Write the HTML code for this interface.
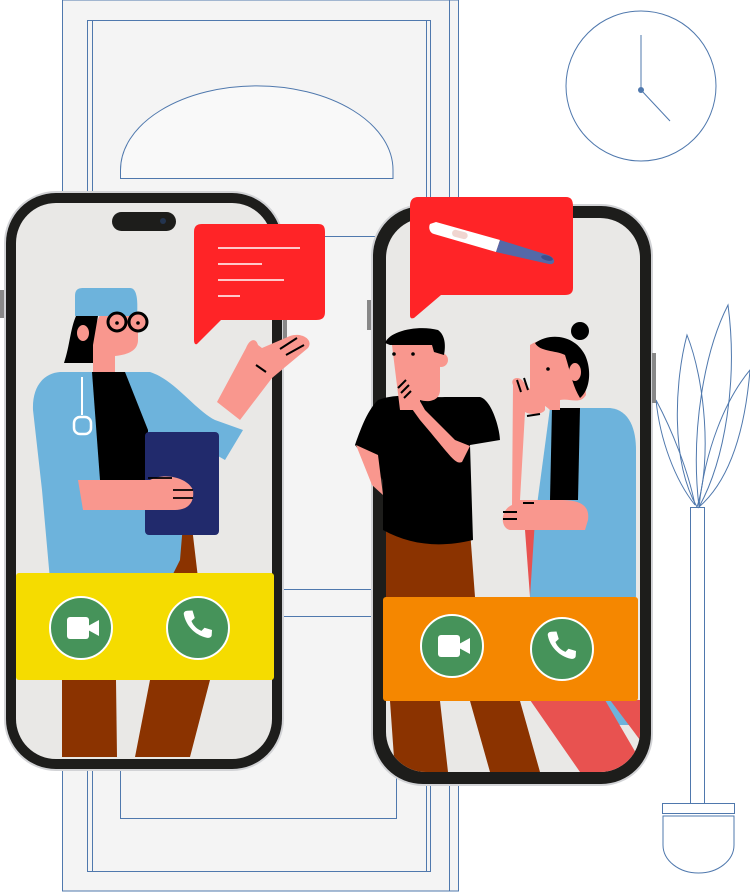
<!DOCTYPE html>
<html><head><meta charset="utf-8"><style>
html,body{margin:0;padding:0;background:#fff;width:750px;height:894px;overflow:hidden}
svg{display:block}
</style></head><body>
<svg width="750" height="894" viewBox="0 0 750 894" xmlns="http://www.w3.org/2000/svg">
<g fill="none" stroke="#4f78ad" stroke-width="1">
 <rect x="62.5" y="0" width="396" height="891" fill="#f4f4f4"/>
 <line x1="449.5" y1="0" x2="449.5" y2="891"/>
 <rect x="87.5" y="20.5" width="343" height="851"/>
 <rect x="92.5" y="20.5" width="334" height="851"/>
 <path d="M120.5 178.5 V170 A136 84 0 0 1 393 170 V178.5 Z" fill="#f9f9f9"/>
 <rect x="120.5" y="236.5" width="276" height="582"/>
 <line x1="120" y1="589.5" x2="397" y2="589.5"/>
 <line x1="120" y1="616.5" x2="397" y2="616.5"/>
 <circle cx="641" cy="86" r="75" fill="#fff"/>
 <line x1="641" y1="90" x2="641" y2="35"/>
 <line x1="641" y1="90" x2="670" y2="121"/>
 <rect x="690.5" y="507.5" width="14" height="296"/>
 <rect x="662.5" y="803.5" width="72" height="10"/>
 <path d="M663 816 H734 V845 A35.5 28 0 0 1 663 845 Z"/>
 <path d="M697 507 C670 460 675 380 687 335 C705 380 712 460 697 507 Z"/>
 <path d="M699 507 C690 430 705 350 728 305 C738 380 725 460 699 507 Z"/>
 <path d="M699 507 C705 450 725 400 750 370 C745 430 730 480 699 507 Z"/>
 <path d="M695 505 C675 480 660 440 656 400 C672 430 688 470 695 505 Z"/>
</g>
<circle cx="641" cy="90" r="3" fill="#4f78ad"/>

<!-- LEFT PHONE -->
<rect x="4" y="191" width="280" height="580" rx="52" fill="#d2d3d6"/>
<rect x="6" y="193" width="276" height="576" rx="50" fill="#1d1d1b"/>
<rect x="16" y="203" width="256" height="556" rx="40" fill="#e9e8e6"/>
<rect x="0" y="290" width="4" height="28" fill="#888"/>
<rect x="283" y="310" width="4" height="50" fill="#888"/>
<clipPath id="c1"><rect x="16" y="203" width="256" height="556" rx="40"/></clipPath>
<g clip-path="url(#c1)">
 <path d="M101 510 H190 L210 680 L190 757 H135 L150 680 H116 L117 757 H62 L62 680 Z" fill="#8b3300"/>
 <path d="M60 372 H150 C175 380 195 410 215 420 L243 430 L225 460 L190 440 L180 560 L170 580 H50 L42 490 L33 410 C32 385 45 373 60 372 Z" fill="#6db3dc"/>
 <path d="M92 372 H125 L148 430 L148 480 H100 Z" fill="#000"/>
 <path d="M82 377 V415" stroke="#fff" stroke-width="2"/>
 <rect x="74" y="417" width="17" height="17" rx="6" fill="none" stroke="#fff" stroke-width="2.5"/>
 <rect x="145" y="432" width="74" height="103" rx="4" fill="#212a6c"/>
 <path d="M78 480 H150 C165 472 188 478 193 490 C195 505 185 510 175 510 H83 Z" fill="#f9978e"/>
 <path d="M148 478 H172 M173 490 H193 M173 498 H193" stroke="#000" stroke-width="1.8"/>
 <path d="M100 315 H138 V340 C138 352 125 355 115 356 V372 H93 V330 Z" fill="#f9978e"/>
 <path d="M98 316 H76 C70 330 70 345 64 363 H93 V345 Z" fill="#000"/>
 <ellipse cx="83" cy="333" rx="6" ry="8" fill="#f9978e"/>
 <path d="M75 296 C75 288 80 288 85 288 H130 C137 288 138 300 137 316 H75 Z" fill="#6db3dc"/>
 <circle cx="117" cy="322" r="9" fill="#f9978e" stroke="#000" stroke-width="3"/>
 <circle cx="138" cy="322" r="9" fill="#f9978e" stroke="#000" stroke-width="3"/>
 <circle cx="117" cy="323" r="1.8" fill="#000"/><circle cx="138" cy="323" r="1.8" fill="#000"/>
</g>
<!-- raised arm (over bezel) -->
<path d="M217 402 L246 348 C250 338 256 338 258 345 L262 348 L290 336 C302 332 314 340 308 348 L272 378 L240 420 Z" fill="#f9978e"/>
<path d="M280 349 L297 338 M286 355 L304 345 M256 365 L266 372" stroke="#000" stroke-width="2"/>
<rect x="112" y="212" width="64" height="19" rx="9.5" fill="#1d1d1b"/>
<circle cx="163" cy="221" r="3" fill="#23344f"/>
<rect x="16" y="573" width="258" height="107" rx="3" fill="#f5dc00"/>
<circle cx="81" cy="628" r="31" fill="#46935a" stroke="#fff" stroke-width="2"/>
<circle cx="198" cy="628" r="31" fill="#46935a" stroke="#fff" stroke-width="2"/>

<!-- RIGHT PHONE -->
<rect x="371" y="204" width="282" height="582" rx="52" fill="#d2d3d6"/>
<rect x="373" y="206" width="278" height="578" rx="50" fill="#1d1d1b"/>
<rect x="386" y="218" width="254" height="554" rx="40" fill="#e9e8e6"/>
<rect x="367" y="300" width="4" height="30" fill="#888"/>
<rect x="652" y="353" width="4" height="50" fill="#888"/>
<clipPath id="c2"><rect x="386" y="218" width="254" height="554" rx="40"/></clipPath>
<g clip-path="url(#c2)">
 <path d="M600 701 H640 V725 H600 Z" fill="#6db3dc"/>
 <path d="M525 530 H580 L578 597 H530 Z M530 700 H605 L640 760 V772 H580 Z M610 700 H640 V740 Z" fill="#e85250"/>
 <path d="M383 530 H470 L475 597 H383 Z M390 701 H440 L448 772 H395 Z M470 701 H520 L540 772 H490 Z" fill="#8b3300"/>
 <path d="M550 408 H610 C630 410 636 430 636 450 V597 H530 L535 520 Z" fill="#6db3dc"/>
 <path d="M552 408 H580 L578 500 H550 Z" fill="#000"/>
 <path d="M530 345 C545 335 575 340 583 355 L586 395 C580 405 570 398 560 400 V410 H550 C545 405 535 400 530 392 Z" fill="#f9978e"/>
 <path d="M535 343 C550 332 575 335 585 355 C592 370 590 390 580 398 C572 385 570 370 565 355 C555 350 540 352 535 343 Z" fill="#000"/>
 <circle cx="580" cy="331" r="9" fill="#000"/>
 <ellipse cx="575" cy="372" rx="6" ry="9" fill="#f9978e"/>
 <circle cx="548" cy="369" r="1.8" fill="#000"/>
 <path d="M513 385 C510 378 518 376 522 380 L535 395 L545 400 V410 C542 415 530 415 525 412 L520 500 H560 C580 500 590 505 588 520 L585 530 H510 C500 528 500 510 512 505 Z" fill="#f9978e"/>
 <path d="M517 380 L521 392 M524 378 L528 390 M527 416 L540 414 M523 503 H534 M503 512 H517 M503 519 H517" stroke="#000" stroke-width="2"/>
</g>
<!-- man (extends beyond screen) -->
<path d="M378 400 C400 392 420 398 445 397 H480 C492 400 500 430 500 440 L470 445 L473 540 C440 548 410 545 383 530 L383 480 L355 445 C362 425 368 410 378 400 Z" fill="#000"/>
<path d="M356 445 L378 455 L383 495 L372 485 Z" fill="#f9978e"/>
<path d="M402 395 C395 385 400 378 408 380 L425 410 L455 440 L470 446 L462 462 C455 465 450 455 420 420 Z" fill="#f9978e"/>
<path d="M392 345 H440 V390 C440 400 430 403 420 400 V410 H400 Z" fill="#f9978e"/>
<circle cx="441" cy="360" r="7" fill="#f9978e"/>
<path d="M385 343 C390 330 420 325 438 330 C445 335 446 345 444 355 L434 352 L432 345 H390 Z" fill="#000"/>
<circle cx="394" cy="354" r="1.8" fill="#000"/><circle cx="413" cy="354" r="1.8" fill="#000"/>
<path d="M398 388 L406 380 M401 393 L409 385 M404 398 L411 391" stroke="#000" stroke-width="2"/>

<rect x="383" y="597" width="255" height="104" rx="3" fill="#f58700"/>
<circle cx="452" cy="646" r="31" fill="#46935a" stroke="#fff" stroke-width="2"/>
<circle cx="562" cy="649" r="31" fill="#46935a" stroke="#fff" stroke-width="2"/>

<g fill="#fff">
 <rect x="67" y="617" width="22" height="22" rx="3"/><path d="M88 626 L99 620 V636 L88 630 Z"/>
 <rect x="438" y="635" width="22" height="22" rx="3"/><path d="M459 644 L470 638 V654 L459 648 Z"/>
</g>
<g fill="#fff">
 <path transform="translate(182,609) scale(1.5)" d="M3.6 1.2 L7 1 L8.5 6 L6.3 8 C7.5 11 10 13.5 13 14.6 L15 12.5 L20 14 L19.8 17.5 C19.5 19 18 19.5 16.5 19.2 C8.8 17.5 2.5 11 1.2 3.5 C1 2.2 2 1.3 3.6 1.2 Z"/>
 <path transform="translate(546,630) scale(1.5)" d="M3.6 1.2 L7 1 L8.5 6 L6.3 8 C7.5 11 10 13.5 13 14.6 L15 12.5 L20 14 L19.8 17.5 C19.5 19 18 19.5 16.5 19.2 C8.8 17.5 2.5 11 1.2 3.5 C1 2.2 2 1.3 3.6 1.2 Z"/>
</g>

<path d="M202 224 H318 C323 224 325 226 325 232 V312 C325 318 322 320 316 320 H221 L197 344 C195 345 194 343 194 340 V232 C194 226 197 224 202 224 Z" fill="#ff2427"/>
<g stroke="#fff" stroke-width="1.5"><path d="M218 248 H300 M218 264 H262 M218 280 H284 M218 296 H240"/></g>
<path d="M418 197 H566 C571 197 573 200 573 206 V288 C573 293 570 295 565 295 H441 L414 318 C411 319 410 318 410 315 V206 C410 200 413 197 418 197 Z" fill="#ff2427"/>
<path d="M430 224 C428 228 430 233 434 234 L496 252 L500 240 L436 222 Z" fill="#fff"/>
<path d="M500 240 L548 255 C556 258 556 265 549 264 L496 252 Z" fill="#5469a8"/>
<rect x="452" y="231" width="16" height="7" rx="3.5" fill="#f0d5d0" transform="rotate(15 460 234)"/>
<ellipse cx="547" cy="258" rx="6" ry="2.5" fill="#3c4f8d" transform="rotate(15 547 258)"/>
</svg>
</body></html>
